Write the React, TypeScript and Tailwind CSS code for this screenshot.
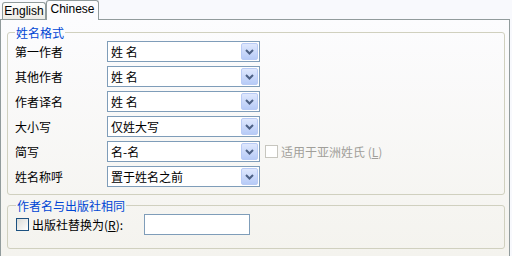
import React from "react";

const Chevron = () => (
  <svg width="9" height="6" viewBox="0 0 9 6">
    <path d="M1 1l3.5 3.5L8 1" fill="none" stroke="#4d6185" strokeWidth={2} />
  </svg>
);

const Combo = ({ value }: { value: string }) => (
  <div className="flex h-[21px] w-[153px] items-center border border-[#7f9db9] bg-white pl-[3px] pr-px">
    <span className="flex-1 text-[12px] leading-none text-black">{value}</span>
    <div className="flex h-[17px] w-[17px] items-center justify-center rounded-[2px] border border-[#b9cbf5] bg-gradient-to-b from-[#dfe8fd] to-[#b7cbf7]">
      <Chevron />
    </div>
  </div>
);

const rows = [
  { label: "第一作者", value: "姓 名" },
  { label: "其他作者", value: "姓 名" },
  { label: "作者译名", value: "姓 名" },
  { label: "大小写", value: "仅姓大写" },
  { label: "简写", value: "名-名", extra: true },
  { label: "姓名称呼", value: "置于姓名之前" },
];

export default function App() {
  return (
    <div
      className="flex h-[256px] w-[512px] flex-col bg-[#f8f9fd] text-[12px]"
      style={{ fontFamily: '"Noto Sans CJK SC", "Liberation Sans", sans-serif' }}
    >
      {/* tabs */}
      <div className="flex h-[19px] items-end pl-[2px]">
        <div className="flex h-[17px] w-[44px] items-center justify-center rounded-t-[3px] border border-b-0 border-[#919b9c] bg-gradient-to-b from-white to-[#ecebe6] text-[12px] text-black" style={{ fontFamily: '"Liberation Sans", sans-serif' }}>
          English
        </div>
        <div className="relative z-10 -mb-px flex h-[20px] w-[53px] flex-col rounded-t-[3px] border border-b-0 border-[#919b9c] bg-[#fcfcfe]">
          <div className="-mx-px -mt-px h-[3px] rounded-t-[3px] bg-[#e68b2c]" />
          <div className="flex flex-1 items-center justify-center pb-[2px] text-[12px] text-black" style={{ fontFamily: '"Liberation Sans", sans-serif' }}>
            Chinese
          </div>
        </div>
      </div>

      {/* panel */}
      <div className="mr-[2px] flex flex-1 flex-col border border-b-0 border-[#919b9c] bg-gradient-to-b from-[#fcfcfe] to-[#f4f3ee] pl-[6px] pr-[4px] pt-[5px]">
        <fieldset className="h-[170px] rounded-[3px] border border-[#d0d0bf] px-[7px] pb-0">
          <legend className="px-[1px] text-[12px] leading-[15px] text-[#0046d5]">姓名格式</legend>
          <div className="flex flex-col gap-[4px] pt-[1px]">
            {rows.map((r) => (
              <div key={r.label} className="flex items-center">
                <span className="w-[92px] text-[12px] text-black">{r.label}</span>
                <Combo value={r.value} />
                {r.extra && (
                  <div className="ml-[5px] flex items-center gap-[3px] text-[#a19f9a]">
                    <div className="h-[13px] w-[13px] border border-[#c7c6bf] bg-white" />
                    <span>适用于亚洲姓氏 (<span className="underline">L</span>)</span>
                  </div>
                )}
              </div>
            ))}
          </div>
        </fieldset>

        <fieldset className="mt-[3px] h-[51px] rounded-[3px] border border-[#d0d0bf] px-[8px]">
          <legend className="px-[1px] text-[12px] leading-[15px] text-[#0046d5]">作者名与出版社相同</legend>
          <div className="flex items-center pt-px">
            <div className="h-[13px] w-[13px] border border-[#1c5180] bg-gradient-to-br from-[#dcdcd7] to-white" />
            <span className="ml-[3px] w-[112px] text-black">
              出版社替换为(<span className="underline">R</span>):
            </span>
            <div className="h-[21px] w-[106px] border border-[#7f9db9] bg-white" />
          </div>
        </fieldset>
      </div>
    </div>
  );
}
